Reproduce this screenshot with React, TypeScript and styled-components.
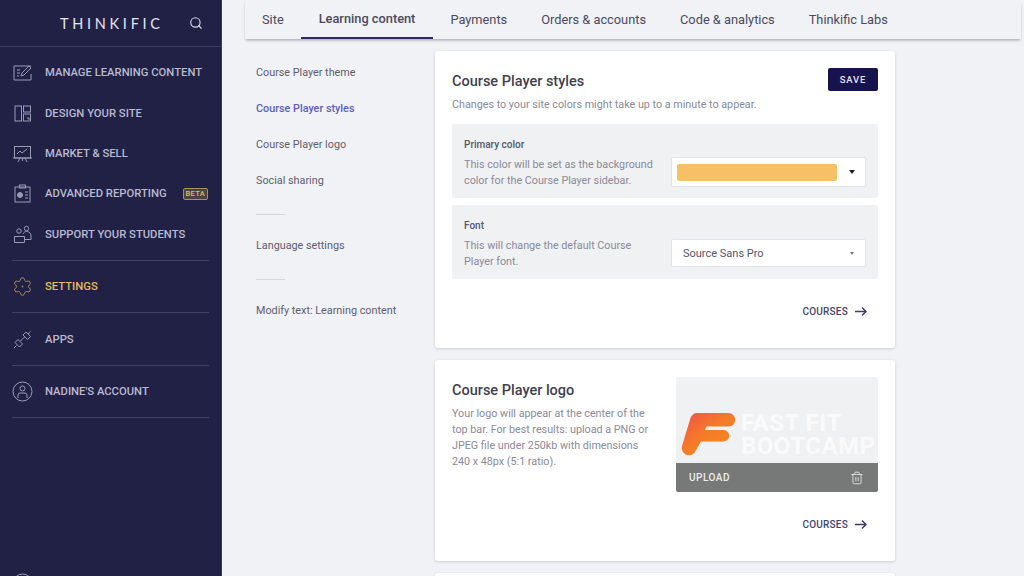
import React from 'react'
import styled, { createGlobalStyle } from 'styled-components'
import { Search, Trash2 } from 'lucide-react'

const GlobalStyle = createGlobalStyle`
  html, body {
    margin: 0;
    padding: 0;
    height: 100%;
    overflow: hidden;
    background: #f1f2f5;
  }
  * {
    box-sizing: border-box;
  }
`

const Page = styled.div`
  display: flex;
  width: 1024px;
  height: 576px;
  overflow: hidden;
  font-family: 'Roboto', sans-serif;
`

const Sidebar = styled.aside`
  flex: 0 0 222px;
  height: 576px;
  overflow: hidden;
  background: #212146;
  border-right: 1px solid #3b3b63;
`

const Brand = styled.div`
  display: flex;
  align-items: center;
  height: 47px;
  padding: 0 18px 0 60px;
  border-bottom: 1px solid #3d3d66;
`

const BrandName = styled.span`
  flex: 1;
  color: #e6e6ee;
  font-family: 'Lato', sans-serif;
  font-size: 14.5px;
  letter-spacing: 3.7px;
`

const NavGroup = styled.div`
  margin: 0 12px;
  border-bottom: 1px solid #3f3f68;
`

const NavGroupInner = styled.div`
  padding: 5.5px 0;
`

const NavItem = styled.div<{ $active?: boolean; $tall?: boolean }>`
  display: flex;
  align-items: center;
  height: ${(p) => (p.$tall ? '51.5px' : '40.4px')};
  color: ${(p) => (p.$active ? '#e2bb62' : '#b9b9cf')};
  font-size: 11.25px;
  font-weight: 500;
  white-space: nowrap;
`

const NavIcon = styled.svg`
  flex: 0 0 21px;
  width: 21px;
  height: 21px;
  margin-right: 12px;
  fill: none;
  stroke: currentColor;
  stroke-width: 1;
  opacity: 0.8;
`

const Beta = styled.span`
  margin-left: 16px;
  padding: 0 2px;
  border: 1px solid #a8915a;
  border-radius: 2px;
  background: #4a4340;
  color: #e2bb62;
  font-size: 7.5px;
  line-height: 10px;
  letter-spacing: 0.3px;
`

const FooterIcon = styled.svg`
  display: block;
  width: 21px;
  height: 21px;
  margin: 155px 0 0 12px;
  fill: none;
  stroke: #b9b9cf;
  stroke-width: 1;
  opacity: 0.8;
`

const Main = styled.main`
  flex: 1;
  min-width: 0;
`

const Tabs = styled.nav`
  display: flex;
  height: 39px;
  margin: 0 3px 0 23px;
  box-shadow: 0 2px 3px -1px rgba(70, 70, 90, 0.5);
`

const Tab = styled.div<{ $active?: boolean }>`
  display: flex;
  align-items: center;
  height: 39px;
  padding: 0 ${(p) => (p.$active ? '18px' : '17px')};
  color: #4a4a5e;
  font-size: 12.8px;
  white-space: nowrap;
  border-bottom: ${(p) => (p.$active ? '2px solid #2e2a66' : '0')};
  font-weight: ${(p) => (p.$active ? 500 : 400)};
`

const Content = styled.div`
  display: flex;
  padding: 12px 0 0 34px;
`

const SubNav = styled.div`
  flex: 0 0 179px;
  padding-top: 14px;
`

const SubLink = styled.div<{ $active?: boolean; $height?: number }>`
  height: ${(p) => p.$height ?? 36}px;
  color: ${(p) => (p.$active ? '#5b5fb8' : '#5d5d6e')};
  font-size: 10.8px;
  line-height: 16px;
  font-weight: ${(p) => (p.$active ? 500 : 400)};
  white-space: nowrap;
`

const SubRule = styled.div`
  width: 29px;
  height: 1px;
  margin: 0 0 23px;
  background: #d6d7dd;
`

const Cards = styled.div`
  display: flex;
  flex-direction: column;
  gap: 12px;
  width: 460px;
`

const Card = styled.section<{ $height: number }>`
  flex: none;
  height: ${(p) => p.$height}px;
  padding: 17px 17px 0;
  background: #fff;
  border-radius: 3px;
  box-shadow: 0 1px 3px rgba(60, 60, 80, 0.2);
`

const CardHead = styled.div`
  display: flex;
  align-items: center;
  justify-content: space-between;
`

const CardTitle = styled.h2`
  margin: 0;
  color: #3f3f50;
  font-size: 14.5px;
  font-weight: 500;
`

const HeadTitle = styled(CardTitle)`
  padding-top: 4px;
`

const SaveButton = styled.button`
  width: 50px;
  height: 23px;
  padding: 0;
  border: 0;
  border-radius: 2px;
  background: #17134f;
  color: #e4e4ee;
  font-family: 'Roboto', sans-serif;
  font-size: 9.5px;
  font-weight: 500;
  letter-spacing: 0.8px;
`

const Muted = styled.p`
  margin: 0;
  color: #8a8a98;
  font-size: 10.75px;
  line-height: 16px;
`

const Intro = styled(Muted)`
  margin: 6px 0 11px;
`

const Setting = styled.div`
  display: flex;
  height: 74px;
  margin-bottom: 7px;
  padding: 14px 12px 0;
  border-radius: 2px;
  background: #f0f1f3;
`

const SettingText = styled.div`
  flex: 0 0 207px;
  padding-right: 16px;
`

const SettingLabel = styled.div`
  margin-bottom: 5px;
  color: #56566a;
  font-size: 10px;
  font-weight: 500;
  line-height: 14px;
`

const SelectBox = styled.div<{ $height: number; $offset: number }>`
  display: flex;
  align-items: center;
  justify-content: space-between;
  width: 195px;
  height: ${(p) => p.$height}px;
  margin-top: ${(p) => p.$offset}px;
  padding: 0 5px;
  background: #fff;
  border: 1px solid #e3e4e8;
  border-radius: 2px;
`

const Swatch = styled.div`
  width: 160px;
  height: 17px;
  border-radius: 2px;
  background: #f5c066;
`

const SelectValue = styled.span`
  padding-left: 6px;
  color: #56566a;
  font-size: 11px;
`

const Caret = styled.span<{ $dark?: boolean; $small?: boolean }>`
  width: 0;
  height: 0;
  margin-right: ${(p) => (p.$small ? '6px' : '5px')};
  border-left: ${(p) => (p.$small ? '2.5px' : '3.5px')} solid transparent;
  border-right: ${(p) => (p.$small ? '2.5px' : '3.5px')} solid transparent;
  border-top: ${(p) => (p.$small ? '3px' : '4px')} solid ${(p) => (p.$dark ? '#1d1d2c' : '#77778a')};
`

const CardLink = styled.div<{ $top: number }>`
  display: flex;
  align-items: center;
  justify-content: flex-end;
  gap: 7px;
  margin-top: ${(p) => p.$top}px;
  padding-right: 11px;
  color: #45456b;
  font-size: 10px;
  font-weight: 500;
  letter-spacing: 0.22px;
`

const ArrowIcon = styled.svg`
  width: 12px;
  height: 11px;
  fill: none;
  stroke: #3f3a6b;
  stroke-width: 1.5;
`

const LogoRow = styled.div`
  display: flex;
  justify-content: space-between;
`

const LogoText = styled.div`
  width: 200px;
  padding-top: 5px;
`

const LogoDescription = styled(Muted)`
  margin-top: 7px;
`

const Uploader = styled.div`
  width: 202px;
  height: 115px;
  border-radius: 2px;
  overflow: hidden;
  background: #f0f1f3;
`

const LogoPreview = styled.div`
  display: flex;
  align-items: flex-end;
  gap: 6px;
  height: 86px;
  padding: 0 0 7px 5px;
`

const LogoWords = styled.div`
  margin-bottom: -2px;
  color: #fafafb;
  font-size: 24px;
  font-weight: 700;
  line-height: 23px;
  letter-spacing: 0.5px;
  white-space: nowrap;
`

const UploadBar = styled.div`
  display: flex;
  align-items: center;
  justify-content: space-between;
  height: 29px;
  padding: 0 14px 0 13px;
  background: #777978;
  color: #eceded;
  font-size: 10px;
  font-weight: 500;
  letter-spacing: 0.5px;
`

const navIcons = {
  manage: (
    <>
      <path d="M19 4H2v14h17v-6" />
      <path d="M9 14l1-3 7-7 2 2-7 7z" />
      <path d="M5 8h3M5 11h3M5 14h2" />
    </>
  ),
  design: (
    <>
      <rect x="3" y="3" width="6.500" height="15" />
      <rect x="11.500" y="3" width="7" height="6" />
      <rect x="11.500" y="11" width="7" height="7" />
      <path d="M15 15h2v2" />
    </>
  ),
  market: (
    <>
      <rect x="2.500" y="3.500" width="16" height="11.500" />
      <path d="M1 15h19M8 15l-2 4M13 15l2 4M10.500 15v3" />
      <path d="M5 11l3-3 2 2 5-4" />
    </>
  ),
  report: (
    <>
      <rect x="3" y="4" width="15" height="15" />
      <rect x="7.500" y="2" width="6" height="3" />
      <circle cx="8" cy="12" r="2.500" fill="currentColor" />
      <path d="M13 9h3M13 12h3M13 15h3" />
    </>
  ),
  support: (
    <>
      <circle cx="7" cy="7" r="2.200" />
      <circle cx="14.500" cy="4.500" r="2.200" />
      <path d="M2.500 12.500h10v6h-10z" />
      <path d="M11 10c1-2 2-2.500 3.500-2.500 3 0 4.500 2 4.500 4.500v3.500h-6.500" />
    </>
  ),
  settings: (
    <>
      <path
        transform="scale(0.875)"
        d="M9.671 4.136a2.34 2.34 0 0 1 4.659 0 2.34 2.34 0 0 0 3.319 1.915 2.34 2.34 0 0 1 2.33 4.033 2.34 2.34 0 0 0 0 3.831 2.34 2.34 0 0 1-2.33 4.033 2.34 2.34 0 0 0-3.319 1.915 2.34 2.34 0 0 1-4.659 0 2.34 2.34 0 0 0-3.32-1.915 2.34 2.34 0 0 1-2.33-4.033 2.34 2.34 0 0 0 0-3.831A2.34 2.34 0 0 1 6.35 6.051a2.34 2.34 0 0 0 3.32-1.915"
      />
      <circle cx="10.500" cy="10.500" r="0.500" />
    </>
  ),
  apps: (
    <>
      <path d="M2 19l2.500-2.500M18.500 2.500L16 5" />
      <path d="M3 13.500l3-3 4.500 4.500-3 3z" />
      <path d="M11 6l3-3 4.500 4.500-3 3z" />
      <path d="M8.500 12l4-4" />
    </>
  ),
  account: (
    <>
      <circle cx="10.500" cy="10.500" r="9.500" />
      <circle cx="10.500" cy="7.500" r="2.500" />
      <path d="M6 17v-3a2 2 0 0 1 2-2h5a2 2 0 0 1 2 2v3" />
    </>
  ),
}

type NavIconName = keyof typeof navIcons

const topItems: { label: string; icon: NavIconName; beta?: boolean }[] = [
  { label: 'MANAGE LEARNING CONTENT', icon: 'manage' },
  { label: 'DESIGN YOUR SITE', icon: 'design' },
  { label: 'MARKET & SELL', icon: 'market' },
  { label: 'ADVANCED REPORTING', icon: 'report', beta: true },
  { label: 'SUPPORT YOUR STUDENTS', icon: 'support' },
]

const lowerItems: { label: string; icon: NavIconName; active?: boolean }[] = [
  { label: 'SETTINGS', icon: 'settings', active: true },
  { label: 'APPS', icon: 'apps' },
  { label: "NADINE'S ACCOUNT", icon: 'account' },
]

const tabs = ['Site', 'Learning content', 'Payments', 'Orders & accounts', 'Code & analytics', 'Thinkific Labs']

const CoursesLink = ({ top }: { top: number }) => (
  <CardLink $top={top}>
    COURSES
    <ArrowIcon viewBox="0 0 12 11">
      <path d="M0 5.500h11M7 1.500l4 4-4 4" />
    </ArrowIcon>
  </CardLink>
)

const App: React.FC = () => {
  return (
    <Page>
      <GlobalStyle />
      <Sidebar>
        <Brand>
          <BrandName>THINKIFIC</BrandName>
          <Search size={14} strokeWidth={2} color="#d8d8e4" />
        </Brand>
        <NavGroup>
          <NavGroupInner>
            {topItems.map(({ label, icon, beta }) => (
              <NavItem key={label}>
                <NavIcon viewBox="0 0 21 21">{navIcons[icon]}</NavIcon>
                {label}
                {beta && <Beta>BETA</Beta>}
              </NavItem>
            ))}
          </NavGroupInner>
        </NavGroup>
        {lowerItems.map(({ label, icon, active }) => (
          <NavGroup key={label}>
            <NavItem $tall $active={active}>
              <NavIcon viewBox="0 0 21 21">{navIcons[icon]}</NavIcon>
              {label}
            </NavItem>
          </NavGroup>
        ))}
        <FooterIcon viewBox="0 0 21 21">
          <circle cx="10.500" cy="10.500" r="9.500" />
        </FooterIcon>
      </Sidebar>
      <Main>
        <Tabs>
          {tabs.map((tab) => (
            <Tab key={tab} $active={tab === 'Learning content'}>
              {tab}
            </Tab>
          ))}
        </Tabs>
        <Content>
          <SubNav>
            <SubLink>Course Player theme</SubLink>
            <SubLink $active>Course Player styles</SubLink>
            <SubLink>Course Player logo</SubLink>
            <SubLink $height={41}>Social sharing</SubLink>
            <SubRule />
            <SubLink $height={41}>Language settings</SubLink>
            <SubRule />
            <SubLink>Modify text: Learning content</SubLink>
          </SubNav>
          <Cards>
            <Card $height={297}>
              <CardHead>
                <HeadTitle>Course Player styles</HeadTitle>
                <SaveButton>SAVE</SaveButton>
              </CardHead>
              <Intro>Changes to your site colors might take up to a minute to appear.</Intro>
              <Setting>
                <SettingText>
                  <SettingLabel>Primary color</SettingLabel>
                  <Muted>This color will be set as the background color for the Course Player sidebar.</Muted>
                </SettingText>
                <SelectBox $height={30} $offset={19}>
                  <Swatch />
                  <Caret $dark />
                </SelectBox>
              </Setting>
              <Setting>
                <SettingText>
                  <SettingLabel>Font</SettingLabel>
                  <Muted>This will change the default Course Player font.</Muted>
                </SettingText>
                <SelectBox $height={28} $offset={20}>
                  <SelectValue>Source Sans Pro</SelectValue>
                  <Caret $small />
                </SelectBox>
              </Setting>
              <CoursesLink top={27} />
            </Card>
            <Card $height={201}>
              <LogoRow>
                <LogoText>
                  <CardTitle>Course Player logo</CardTitle>
                  <LogoDescription>
                    Your logo will appear at the center of the top bar. For best results: upload a PNG or JPEG file
                    under 250kb with dimensions 240 x 48px (5:1 ratio).
                  </LogoDescription>
                </LogoText>
                <Uploader>
                  <LogoPreview>
                    <svg width="54" height="43" viewBox="0 0 54 43">
                      <defs>
                        <linearGradient id="logoFill" x1="0" y1="0" x2="1" y2="1">
                          <stop offset="0" stopColor="#f24f4f" />
                          <stop offset="0.45" stopColor="#f57a28" />
                          <stop offset="1" stopColor="#f58a1f" />
                        </linearGradient>
                      </defs>
                      <path
                        d="M16 0H47.500a6.700 6.700 0 0 1 0 13.400H25.500L24 17H42.500a5.700 5.700 0 0 1 0 11.400H20L15 37a7.200 7.200 0 0 1-14-4L9.500 5C10.500 2 13 0 16 0z"
                        fill="url(#logoFill)"
                      />
                    </svg>
                    <LogoWords>
                      FAST FIT
                      <br />
                      BOOTCAMP
                    </LogoWords>
                  </LogoPreview>
                  <UploadBar>
                    UPLOAD
                    <Trash2 size={14} strokeWidth={1.4} />
                  </UploadBar>
                </Uploader>
              </LogoRow>
              <CoursesLink top={27} />
            </Card>
            <Card $height={60} />
          </Cards>
        </Content>
      </Main>
    </Page>
  )
}

export default App
